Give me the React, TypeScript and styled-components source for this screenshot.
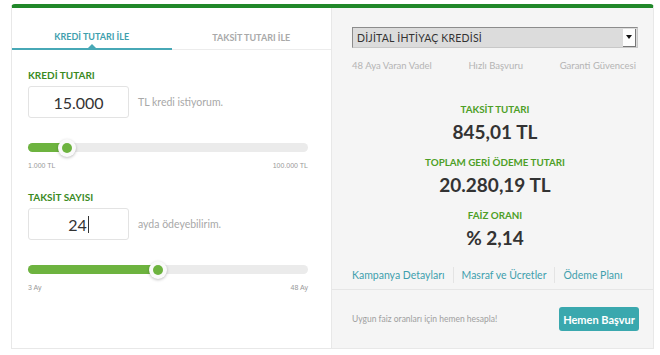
import styled, { createGlobalStyle } from 'styled-components';

const GlobalStyle = createGlobalStyle`
    body {
        margin: 0;
        background: #ffffff;
        font-family: Lato, 'Open Sans', sans-serif;
    }
`;

const features = ['48 Aya Varan Vadel', 'Hızlı Başvuru', 'Garanti Güvencesi'];
const results = [
    { label: 'TAKSİT TUTARI', value: '845,01 TL' },
    { label: 'TOPLAM GERİ ÖDEME TUTARI', value: '20.280,19 TL' },
    { label: 'FAİZ ORANI', value: '% 2,14' },
];
const links = ['Kampanya Detayları', 'Masraf ve Ücretler', 'Ödeme Planı'];

const Slider = ({ percent, min, max }: { percent: number; min: string; max: string }) => (
    <SliderBlock>
        <Track>
            <Fill style={{ width: `${percent}%` }} />
            <Thumb style={{ left: `${percent}%` }} />
        </Track>
        <Range>
            <span>{min}</span>
            <span>{max}</span>
        </Range>
    </SliderBlock>
);

export default function App() {
    return (
        <>
            <GlobalStyle />
            <Page>
                <Card>
                    <Left>
                        <Tabs>
                            <Tab active>KREDİ TUTARI İLE</Tab>
                            <Tab>TAKSİT TUTARI İLE</Tab>
                        </Tabs>
                        <Form>
                            <Label>KREDİ TUTARI</Label>
                            <InputRow>
                                <Input>15.000</Input>
                                <Hint>TL kredi istiyorum.</Hint>
                            </InputRow>
                            <Slider percent={14} min="1.000 TL" max="100.000 TL" />
                            <Label>TAKSİT SAYISI</Label>
                            <InputRow>
                                <Input>
                                    24<Caret />
                                </Input>
                                <Hint>ayda ödeyebilirim.</Hint>
                            </InputRow>
                            <Slider percent={46.6} min="3 Ay" max="48 Ay" />
                        </Form>
                    </Left>
                    <Right>
                        <Top>
                            <Select>
                                <span>DİJİTAL İHTİYAÇ KREDİSİ</span>
                                <SelectArrow>
                                    <svg width="6" height="4" viewBox="0 0 6 4">
                                        <path d="M0 0h6L3 4z" fill="#111" />
                                    </svg>
                                </SelectArrow>
                            </Select>
                            <Features>
                                {features.map((f) => (
                                    <span key={f}>{f}</span>
                                ))}
                            </Features>
                            <Results>
                                {results.map((r) => (
                                    <Result key={r.label}>
                                        <ResultLabel>{r.label}</ResultLabel>
                                        <ResultValue>{r.value}</ResultValue>
                                    </Result>
                                ))}
                            </Results>
                            <Links>
                                {links.map((l) => (
                                    <LinkItem key={l}>{l}</LinkItem>
                                ))}
                            </Links>
                        </Top>
                        <Footer>
                            <FooterText>Uygun faiz oranları için hemen hesapla!</FooterText>
                            <Button>Hemen Başvur</Button>
                        </Footer>
                    </Right>
                </Card>
            </Page>
        </>
    );
}

const Page = styled.div`
    padding: 4px 0 0 11px;
`;

const Card = styled.div`
    width: 641px;
    height: 340px;
    display: grid;
    grid-template-columns: 320px minmax(0, 1fr);
    border: 1px solid #e8e8e8;
    border-top: 4px solid #21882a;
    border-radius: 4px 4px 0 0;
    box-sizing: content-box;
`;

const Left = styled.div`
    background: #fff;
    border-right: 1px solid #e8e8e8;
`;

const Tabs = styled.div`
    display: flex;
    height: 42px;
`;

const Tab = styled.div<{ active?: boolean }>`
    flex: 1;
    display: flex;
    align-items: flex-end;
    justify-content: center;
    padding-bottom: 6px;
    font-size: 9px;
    font-weight: 700;
    color: ${({ active }) => (active ? '#3f9fae' : '#a9a9a9')};
    border-bottom: ${({ active }) => (active ? '2px solid #47a8b6' : '1px solid #ececec')};
    box-sizing: border-box;
    position: relative;
    ${({ active }) =>
        active &&
        `
        &::after {
            content: '';
            position: absolute;
            bottom: 0;
            left: 50%;
            margin-left: -4px;
            border: 4px solid transparent;
            border-bottom-color: #47a8b6;
            border-top-width: 0;
        }
    `}
`;

const Form = styled.div`
    padding: 19px 23px 0 16px;
`;

const Label = styled.div`
    font-size: 10px;
    font-weight: 700;
    color: #3a8a1f;
    margin-bottom: 5px;
`;

const InputRow = styled.div`
    display: flex;
    align-items: center;
    gap: 9px;
`;

const Input = styled.div`
    width: 101px;
    height: 32px;
    box-sizing: border-box;
    border: 1px solid #e3e3e3;
    border-radius: 3px;
    display: flex;
    align-items: center;
    justify-content: center;
    font-size: 16px;
    color: #333;
`;

const Caret = styled.span`
    display: inline-block;
    width: 1px;
    height: 17px;
    background: #333;
    margin-left: 1px;
`;

const Hint = styled.span`
    font-size: 10.5px;
    color: #a8a8a8;
`;

const SliderBlock = styled.div`
    margin: 25px 0 22px;
`;

const Track = styled.div`
    position: relative;
    height: 9px;
    border-radius: 5px;
    background: #ebebeb;
`;

const Fill = styled.div`
    height: 100%;
    border-radius: 5px;
    background: #6db33f;
`;

const Thumb = styled.div`
    position: absolute;
    top: 50%;
    width: 18px;
    height: 18px;
    margin: -9px 0 0 -9px;
    border-radius: 50%;
    background: #fafafa;
    box-shadow: 0 1px 3px rgba(0, 0, 0, 0.25);
    &::after {
        content: '';
        position: absolute;
        left: 4px;
        top: 4px;
        width: 10px;
        height: 10px;
        border-radius: 50%;
        background: #6db33f;
    }
`;

const Range = styled.div`
    display: flex;
    justify-content: space-between;
    margin-top: 10px;
    font-family: 'Liberation Sans', Arial, sans-serif;
    font-size: 7px;
    color: #999;
`;

const Right = styled.div`
    background: #f5f5f5;
    display: flex;
    flex-direction: column;
    min-width: 0;
`;

const Top = styled.div`
    padding: 19px 15px 0 20px;
    border-bottom: 1px solid #e6e6e6;
`;

const Select = styled.div`
    height: 21px;
    box-sizing: border-box;
    border: 1px solid #8c8c8c;
    border-right-color: #c8c8c8;
    border-bottom-color: #c8c8c8;
    background: #dcdcdc;
    display: flex;
    align-items: center;
    justify-content: space-between;
    padding-left: 4px;
    font-size: 10.5px;
    color: #333;
    letter-spacing: 0.2px;
`;

const SelectArrow = styled.div`
    width: 12px;
    height: 17px;
    margin-right: 1px;
    background: #fdfdfd;
    border-right: 1px solid #777;
    border-bottom: 1px solid #777;
    display: flex;
    align-items: center;
    justify-content: center;
`;

const Features = styled.div`
    display: flex;
    justify-content: space-between;
    margin-top: 12px;
    padding-right: 2px;
    font-size: 9.5px;
    color: #b4b4b4;
`;

const Results = styled.div`
    display: flex;
    flex-direction: column;
    align-items: center;
    gap: 13px;
    margin-top: 32px;
`;

const Result = styled.div`
    display: flex;
    flex-direction: column;
    align-items: center;
    gap: 5px;
`;

const ResultLabel = styled.div`
    font-size: 9.8px;
    font-weight: 700;
    color: #4d9f27;
`;

const ResultValue = styled.div`
    font-size: 19px;
    font-weight: 700;
    color: #333;
`;

const Links = styled.div`
    display: flex;
    margin-top: 18px;
    padding: 0 0 6px;
`;

const LinkItem = styled.span`
    font-size: 10.5px;
    color: #3f9fad;
    white-space: nowrap;
    padding: 2px 8px;
    &:first-child {
        padding-left: 0;
    }
    & + & {
        border-left: 1px solid #e4e4e4;
    }
`;

const Footer = styled.div`
    flex: 1;
    display: flex;
    align-items: center;
    justify-content: space-between;
    padding: 0 14px 0 20px;
`;

const FooterText = styled.span`
    font-size: 8.5px;
    color: #a0a0a0;
`;

const Button = styled.div`
    width: 80px;
    height: 24px;
    display: flex;
    align-items: center;
    justify-content: center;
    border-radius: 3px;
    background: #3aa8ae;
    color: #fff;
    font-size: 11px;
    font-weight: 700;
`;
